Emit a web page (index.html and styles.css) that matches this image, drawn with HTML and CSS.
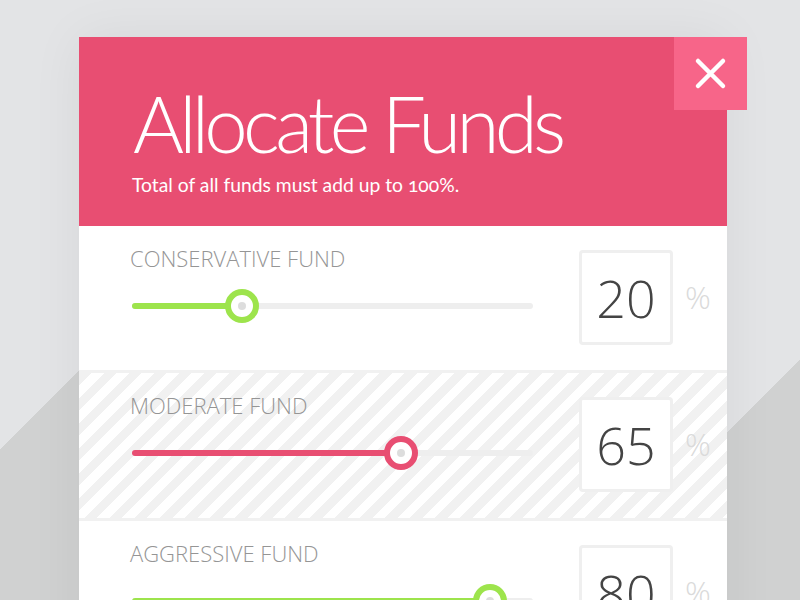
FILE: index.html
```html
<!DOCTYPE html>
<html>
<head>
<meta charset="utf-8">
<link rel="stylesheet" href="styles.css">
</head>
<body>
<div class="card">
  <div class="header">
    <h1 class="title">Allocate Funds</h1>
    <p class="subtitle">Total of all funds must add up to 100%.</p>
    <button class="close" aria-label="Close">
      <svg width="73" height="73" viewBox="0 0 73 73"><path d="M24 24 L49 49 M49 24 L24 49" stroke="#fff" stroke-width="4.5" stroke-linecap="round" fill="none"/></svg>
    </button>
  </div>

  <div class="row">
    <div class="left">
      <div class="label">CONSERVATIVE FUND</div>
      <div class="slider green">
        <div class="track"><div class="fill" style="width:110px"></div></div>
        <div class="thumb" style="left:110px"><span class="dot"></span></div>
      </div>
    </div>
    <div class="box">20</div>
    <div class="pct">%</div>
  </div>

  <div class="row striped">
    <div class="left">
      <div class="label">MODERATE FUND</div>
      <div class="slider pink">
        <div class="track"><div class="fill" style="width:269px"></div></div>
        <div class="thumb" style="left:269px"><span class="dot"></span></div>
      </div>
    </div>
    <div class="box">65</div>
    <div class="pct">%</div>
  </div>

  <div class="row">
    <div class="left">
      <div class="label">AGGRESSIVE FUND</div>
      <div class="slider green">
        <div class="track"><div class="fill" style="width:358px"></div></div>
        <div class="thumb" style="left:358px"><span class="dot"></span></div>
      </div>
    </div>
    <div class="box">80</div>
    <div class="pct">%</div>
  </div>
</div>
</body>
</html>
```

FILE: styles.css
```css
html, body {
  margin: 0;
  padding: 0;
  width: 100%;
  height: 100%;
  overflow: hidden;
}
html {
  background-color: #e3e4e6;
  background-image:
    linear-gradient(135deg, rgba(208, 209, 209, 0) 318px, #d0d1d1 318px),
    linear-gradient(135deg, rgba(208, 209, 209, 0) 820px, #d0d1d1 820px);
  background-size: 79px 100%, 100% 100%;
  background-repeat: no-repeat;
  background-position: 0 0, 0 0;
}
body {
  font-family: "Open Sans", "Liberation Sans", sans-serif;
}
.card {
  position: relative;
  width: 648px;
  margin: 37px 0 0 79px;
  background: #fff;
  box-shadow: 0 0 50px rgba(0, 0, 0, 0.06);
}
.header {
  position: relative;
  height: 189px;
  box-sizing: border-box;
  padding: 47px 0 0 54px;
  background: #e84e72;
  color: #fff;
  font-family: Lato, "Open Sans", sans-serif;
  font-weight: 300;
}
.title {
  margin: 0;
  font-size: 78px;
  line-height: 78px;
  font-weight: 300;
  letter-spacing: -4.7px;
}
.subtitle {
  margin: 13px 0 0 -1px;
  font-size: 19.3px;
  line-height: 19.5px;
  font-weight: 400;
  font-variant-numeric: oldstyle-nums;
}
.close {
  position: absolute;
  top: 0;
  right: -20px;
  width: 73px;
  height: 73px;
  padding: 0;
  border: 0;
  background: #f76589;
  display: block;
}
.close svg { display: block; }

.row {
  display: flex;
  align-items: flex-start;
  height: 144px;
  box-sizing: border-box;
  padding-left: 52px;
}
.row.striped {
  height: 151px;
  border-top: 3px solid #f1f1f1;
  border-bottom: 3px solid #f1f1f1;
  background: repeating-linear-gradient(135deg,
    #f1f1f1 0, #f1f1f1 9px, #fff 9px, #fff 17.7px);
}
.left {
  width: 402px;
  padding-top: 20px;
}
.label {
  font-size: 22px;
  line-height: 25px;
  font-weight: 300;
  color: #959595;
  margin-left: -1px;
}
.slider {
  position: relative;
  height: 34px;
  margin-top: 18px;
  margin-left: 1px;
}
.track {
  position: absolute;
  left: 0;
  right: 0;
  top: 14px;
  height: 6px;
  border-radius: 3px;
  background: #eeeeee;
}
.fill {
  height: 6px;
  border-radius: 3px;
}
.green .fill { background: #9de44c; }
.pink .fill { background: #e84e72; }
.thumb {
  position: absolute;
  top: 0;
  width: 34px;
  height: 34px;
  margin-left: -17px;
  box-sizing: border-box;
  border-radius: 50%;
  border: 6px solid;
  background: #fff;
  display: flex;
  align-items: center;
  justify-content: center;
}
.green .thumb { border-color: #9de44c; }
.pink .thumb { border-color: #e84e72; }
.dot {
  width: 8px;
  height: 8px;
  border-radius: 50%;
  background: #dddddd;
}
.box {
  width: 94px;
  height: 95px;
  margin: 24px 0 0 46px;
  box-sizing: border-box;
  border: 3px solid #efefef;
  border-radius: 4px;
  background: #fff;
  display: flex;
  align-items: center;
  justify-content: center;
  font-size: 52px;
  font-weight: 300;
  color: #444;
}
.pct {
  margin: 51px 0 0 12px;
  font-size: 32px;
  line-height: 40px;
  font-weight: 300;
  color: #dadada;
}
```
